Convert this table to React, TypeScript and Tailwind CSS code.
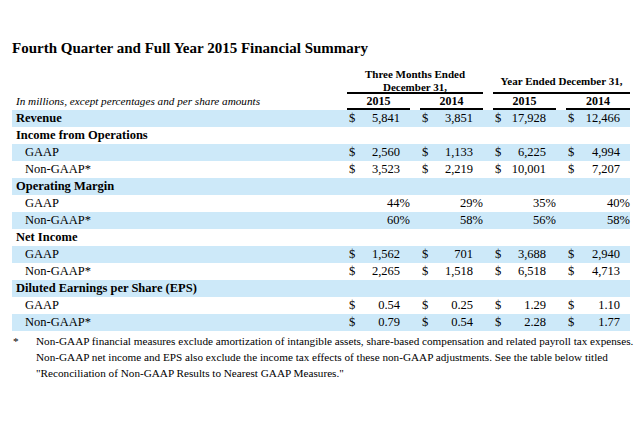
import React from 'react';

type Row = {
  label: string;
  head?: boolean;
  values?: string[];
  dollar?: boolean;
  pct?: boolean;
};

const rows: Row[] = [
  { label: 'Revenue', head: true, values: ['5,841', '3,851', '17,928', '12,466'], dollar: true },
  { label: 'Income from Operations', head: true },
  { label: 'GAAP', values: ['2,560', '1,133', '6,225', '4,994'], dollar: true },
  { label: 'Non-GAAP*', values: ['3,523', '2,219', '10,001', '7,207'], dollar: true },
  { label: 'Operating Margin', head: true },
  { label: 'GAAP', values: ['44%', '29%', '35%', '40%'], pct: true },
  { label: 'Non-GAAP*', values: ['60%', '58%', '56%', '58%'], pct: true },
  { label: 'Net Income', head: true },
  { label: 'GAAP', values: ['1,562', '701', '3,688', '2,940'], dollar: true },
  { label: 'Non-GAAP*', values: ['2,265', '1,518', '6,518', '4,713'], dollar: true },
  { label: 'Diluted Earnings per Share (EPS)', head: true },
  { label: 'GAAP', values: ['0.54', '0.25', '1.29', '1.10'], dollar: true },
  { label: 'Non-GAAP*', values: ['0.79', '0.54', '2.28', '1.77'], dollar: true },
];

const grid = 'grid grid-cols-[325px_63px_63px_63px_64px] gap-x-[10px]';

function Cell({ value, dollar, pct }: { value: string; dollar?: boolean; pct?: boolean }) {
  if (pct) {
    return <div className="text-right">{value}</div>;
  }
  return (
    <div className="flex justify-between pl-[2px] pr-[10px]">
      <span>{dollar ? '$' : ''}</span>
      <span>{value}</span>
    </div>
  );
}

export default function App() {
  return (
    <div
      className="w-[640px] h-[426px] bg-white text-black overflow-hidden"
      style={{ fontFamily: '"Liberation Serif", "Times New Roman", serif' }}
    >
      <div className="pl-[12px] pt-[38px]">
        <h1 className="text-[15px] font-bold leading-[20px]">
          Fourth Quarter and Full Year 2015 Financial Summary
        </h1>

        <div className={`${grid} mt-[10px] w-[618px] text-[11px] font-bold`}>
          <div />
          <div className="col-span-2 border-b-2 border-black text-center leading-[13px] h-[26px]">
            <div>Three Months Ended</div>
            <div>December 31,</div>
          </div>
          <div className="col-span-2 border-b-2 border-black text-center leading-[13px] h-[26px] pt-[7px]">
            Year Ended December 31,
          </div>
        </div>

        <div className={`${grid} w-[618px] leading-[14px]`}>
          <div className="italic text-[11.2px] pl-[4px]">
            In millions, except percentages and per share amounts
          </div>
          {['2015', '2014', '2015', '2014'].map((y, i) => (
            <div key={i} className="font-bold text-[12px] text-center border-b-2 border-black">
              {y}
            </div>
          ))}
        </div>

        <div className="w-[618px] text-[12.5px]">
          {rows.map((r, i) => (
            <div
              key={i}
              className={`${grid} h-[17px] leading-[17px] ${i % 2 === 0 ? 'bg-[#cde9f9]' : 'bg-white'}`}
            >
              <div className={r.head ? 'font-bold pl-[4px]' : 'pl-[13px]'}>{r.label}</div>
              {r.values?.map((v, j) => (
                <Cell key={j} value={v} dollar={r.dollar} pct={r.pct} />
              ))}
            </div>
          ))}
        </div>

        <div className="flex w-[618px] mt-[2px] text-[11.2px] leading-[16px]">
          <div className="w-[24px] shrink-0 pl-[1px]">*</div>
          <div className="whitespace-nowrap">
            Non-GAAP financial measures exclude amortization of intangible assets, share-based compensation and
            related payroll tax expenses.
            <br />
            Non-GAAP net income and EPS also exclude the income tax effects of these non-GAAP adjustments. See the
            table below titled
            <br />
            "Reconciliation of Non-GAAP Results to Nearest GAAP Measures."
          </div>
        </div>
      </div>
    </div>
  );
}
